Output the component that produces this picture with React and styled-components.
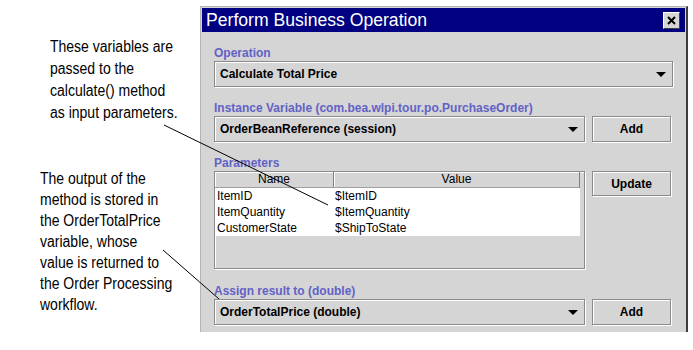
import React from 'react';
import styled, { createGlobalStyle } from 'styled-components';

const GlobalStyle = createGlobalStyle`
  html, body {
    margin: 0;
    padding: 0;
    background: #fff;
  }
`;

const face = '#d5d5d5';

const Page = styled.div`
  position: relative;
  display: flex;
  width: 693px;
  height: 350px;
  overflow: hidden;
  background: #fff;
`;

const Notes = styled.div`
  width: 200px;
  flex: none;
  display: flex;
  flex-direction: column;
`;

// the callout face is a condensed grotesque; squeeze Liberation Sans to match
const Note = styled.p`
  margin: ${p => p.$top}px 0 0 ${p => p.$indent}px;
  font-family: "Liberation Sans", Arial, sans-serif;
  font-size: 16px;
  line-height: ${p => p.$lh}px;
  color: #000;
  white-space: nowrap;
  transform: scaleX(0.875);
  transform-origin: left top;
`;

const Dialog = styled.div`
  margin-top: 6px;
  width: 488px;
  height: 326px;
  box-sizing: border-box;
  background: ${face};
  border-left: 1px solid #b4b4b4;
  border-top: 1px solid #b4b4b4;
  border-right: 2px solid #3c3c3c;
  padding: 1px 1px 0 1px;
  display: flex;
  flex-direction: column;
  font-family: "Liberation Sans", Arial, sans-serif;
`;

const TitleBar = styled.div`
  height: 24px;
  background: #000080;
  display: flex;
  align-items: center;
  justify-content: space-between;
  padding: 0 5px 0 4px;
`;

const Title = styled.span`
  color: #fff;
  font-size: 17.6px;
  line-height: 24px;
  white-space: nowrap;
`;

const CloseButton = styled.div`
  width: 17px;
  height: 17px;
  box-sizing: border-box;
  background: ${face};
  border-top: 1px solid #fff;
  border-left: 1px solid #fff;
  border-right: 1px solid #404040;
  border-bottom: 1px solid #404040;
  display: flex;
  align-items: center;
  justify-content: center;
`;

const Body = styled.div`
  display: flex;
  flex-direction: column;
  padding: 13px 12px 0 12px;
`;

const Section = styled.div`
  margin-top: ${p => p.$gap || 0}px;
  display: flex;
  flex-direction: column;
`;

const Label = styled.div`
  color: #6262c6;
  font-weight: bold;
  font-size: 12px;
  line-height: 16px;
  white-space: nowrap;
`;

const Row = styled.div`
  display: grid;
  grid-template-columns: 371px 79px;
  column-gap: 7px;
  align-items: start;
`;

const bevel = `
  box-sizing: border-box;
  border: 1px solid #8a8a8a;
  box-shadow: inset 1px 1px 0 #fff, 1px 1px 0 #fff;
  background: ${face};
`;

const Combo = styled.div`
  ${bevel}
  width: ${p => p.$width || 371}px;
  height: 26px;
  display: flex;
  align-items: center;
  justify-content: space-between;
  padding: 0 6px 0 5px;
  font-size: 12px;
  font-weight: bold;
  color: #000;
`;

const Arrow = styled.span`
  width: 0;
  height: 0;
  border-left: 5px solid transparent;
  border-right: 5px solid transparent;
  border-top: 5px solid #000;
`;

const Button = styled.div`
  ${bevel}
  height: ${p => p.$height || 26}px;
  display: flex;
  align-items: center;
  justify-content: center;
  font-size: 12px;
  font-weight: bold;
  color: #000;
`;

const TablePane = styled.div`
  ${bevel}
  height: 98px;
  overflow: hidden;
`;

const Grid = styled.div`
  width: 365px;
  display: grid;
  grid-template-columns: 119px 246px;
`;

const HeaderCell = styled.div`
  height: 16px;
  box-sizing: border-box;
  border-right: 1px solid #808080;
  border-bottom: 1px solid #a0a0a0;
  box-shadow: inset 1px 1px 0 #fff;
  font-size: 12px;
  line-height: 15px;
  text-align: center;
  color: #000;
`;

const Cell = styled.div`
  height: 16px;
  background: #fff;
  font-size: 12px;
  line-height: 16px;
  padding-left: ${p => p.$pad}px;
  color: #000;
  white-space: nowrap;
`;

const Leaders = styled.svg`
  position: absolute;
  left: 0;
  top: 0;
  pointer-events: none;
`;

const params = [
  ['ItemID', '$ItemID'],
  ['ItemQuantity', '$ItemQuantity'],
  ['CustomerState', '$ShipToState'],
];

export default function App() {
  return (
    <Page>
      <GlobalStyle />
      <Notes>
        <Note $top={36} $indent={50} $lh={22}>
          These variables are<br />
          passed to the<br />
          calculate() method<br />
          as input parameters.
        </Note>
        <Note $top={44} $indent={40} $lh={21}>
          The output of the<br />
          method is stored in<br />
          the OrderTotalPrice<br />
          variable, whose<br />
          value is returned to<br />
          the Order Processing<br />
          workflow.
        </Note>
      </Notes>

      <Dialog>
        <TitleBar>
          <Title>Perform Business Operation</Title>
          <CloseButton>
            <svg width="9" height="9" viewBox="0 0 9 9">
              <path d="M1 1 L8 8 M8 1 L1 8" stroke="#000" strokeWidth="2" />
            </svg>
          </CloseButton>
        </TitleBar>

        <Body>
          <Section>
            <Label>Operation</Label>
            <Combo $width={459}>
              Calculate Total Price
              <Arrow />
            </Combo>
          </Section>

          <Section $gap={13}>
            <Label>Instance Variable (com.bea.wlpi.tour.po.PurchaseOrder)</Label>
            <Row>
              <Combo>
                OrderBeanReference (session)
                <Arrow />
              </Combo>
              <Button>Add</Button>
            </Row>
          </Section>

          <Section $gap={13}>
            <Label>Parameters</Label>
            <Row>
              <TablePane>
                <Grid>
                  <HeaderCell>Name</HeaderCell>
                  <HeaderCell>Value</HeaderCell>
                  {params.map(([name, value]) => (
                    <React.Fragment key={name}>
                      <Cell $pad={2}>{name}</Cell>
                      <Cell $pad={1}>{value}</Cell>
                    </React.Fragment>
                  ))}
                </Grid>
              </TablePane>
              <Button $height={25}>Update</Button>
            </Row>
          </Section>

          <Section $gap={14}>
            <Label>Assign result to (double)</Label>
            <Row>
              <Combo>
                OrderTotalPrice (double)
                <Arrow />
              </Combo>
              <Button>Add</Button>
            </Row>
          </Section>
        </Body>
      </Dialog>

      <Leaders width="693" height="350">
        <line x1="164" y1="125" x2="328" y2="205" stroke="#000" strokeWidth="1" />
        <line x1="163" y1="250" x2="219" y2="299" stroke="#000" strokeWidth="1" />
      </Leaders>
    </Page>
  );
}
